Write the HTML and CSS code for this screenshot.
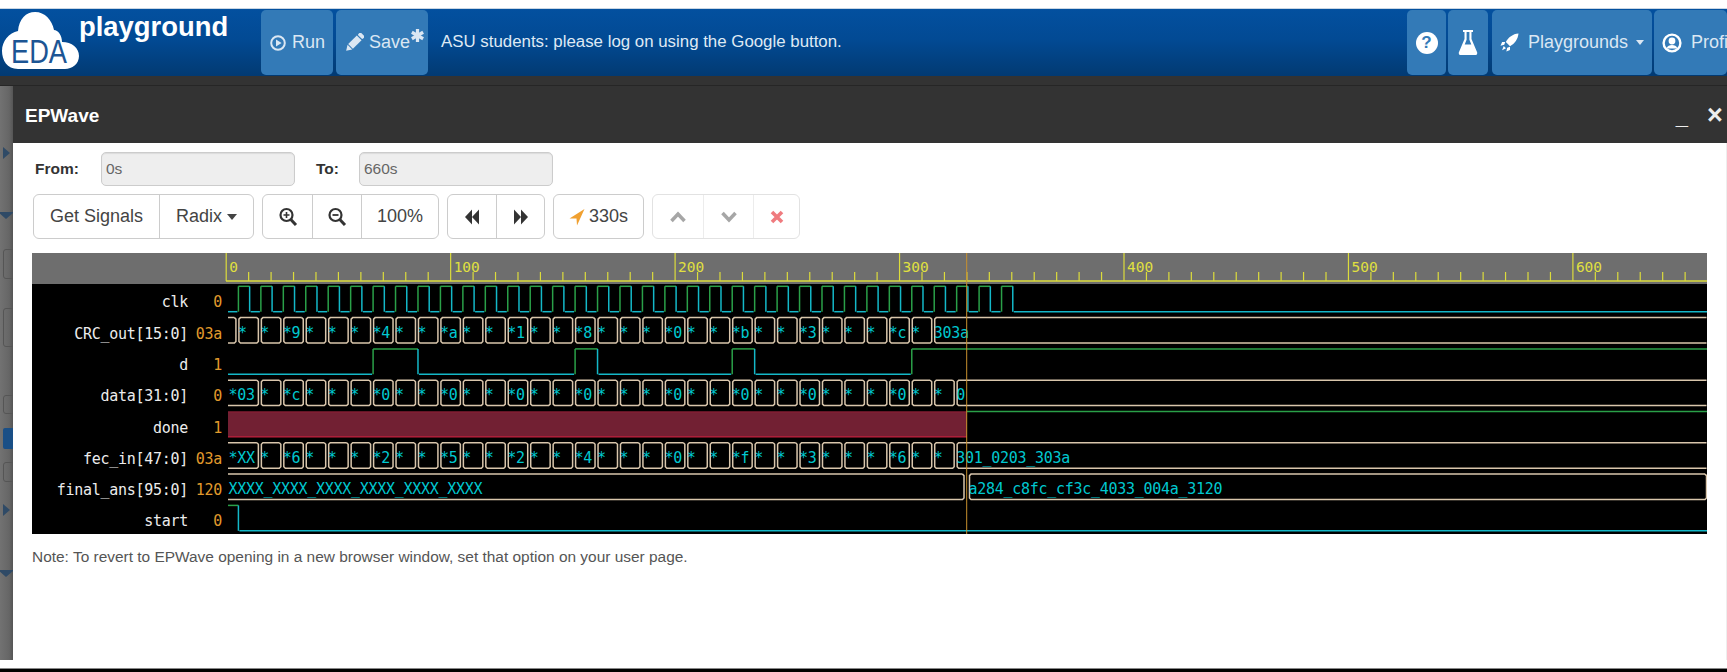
FILE: index.html
```html
<!DOCTYPE html>
<html lang="en">
<head>
    <meta charset="UTF-8">
    <title>EDA Playground - EPWave</title>
    <link rel="stylesheet" href="styles.css">
</head>
<body>
    <div class="topgap"></div>
    <nav class="navbar">
        <div class="logo">
            <svg class="logo-cloud" width="82" height="67" viewBox="0 9 82 67">
                <path fill="#fff" d="M18 69C7 69 2 60 2 51C2 41 9 33 18 31C19 19 26 12 35 12C45 12 52 20 54 30C58 30 62 35 62 42C72 42 79 48 79 56C79 64 72 69 65 69Z"/>
                <text x="11" y="63" class="logo-eda" textLength="56" lengthAdjust="spacingAndGlyphs">EDA</text>
            </svg>
            <span class="logo-text">playground</span>
        </div>
        <a class="nav-btn btn-run">
            <svg width="16" height="16" viewBox="0 0 16 16"><circle cx="8" cy="8" r="6.8" fill="none" stroke="currentColor" stroke-width="2"/><polygon points="6,4.4 11.6,8 6,11.6" fill="currentColor"/></svg>
            Run
        </a>
        <a class="nav-btn btn-save">
            <svg width="20" height="20" viewBox="0 0 18 18"><g transform="rotate(45 9 9)" fill="currentColor"><rect x="6" y="-2" width="6" height="3.4" rx="1"/><rect x="6" y="2.4" width="6" height="11"/><polygon points="6,14.2 12,14.2 9,19"/></g></svg>
            Save
            <svg class="save-star" width="13" height="13" viewBox="0 0 12 12"><g stroke="currentColor" stroke-width="3"><line x1="6" y1="0" x2="6" y2="12"/><line x1="0.8" y1="3" x2="11.2" y2="9"/><line x1="0.8" y1="9" x2="11.2" y2="3"/></g></svg>
        </a>
        <div class="nav-msg">ASU students: please log on using the Google button.</div>
        <a class="nav-btn btn-help"><span class="help-dot">?</span></a>
        <a class="nav-btn btn-flask">
            <svg width="22" height="27" viewBox="0 0 20 27"><path fill="#fff" fill-rule="evenodd" d="M5 1h10v2h-1.5v7l5.5 13a2 2 0 0 1-2 3H3a2 2 0 0 1-2-3l5.5-13V3H5zM8.6 3v7.8L6.7 15.5h6.6l-1.9-4.7V3z"/></svg>
        </a>
        <a class="nav-btn btn-playgrounds">
            <svg width="19" height="19" viewBox="0 0 18 18" fill="#fff"><path d="M17.5 .5C12 1 8 4 5.5 8.5l4 4C14 10 17 6 17.5 .5z"/><path d="M5 8.5H2L.5 12l3.5-.8z"/><path d="M9.5 13v3L6 17.5l.8-3.5z"/><path d="M3.5 12.3l2.2 2.2L2 16.4z"/></svg>
            <span class="nav-label">Playgrounds</span>
            <span class="caret caret-nav"></span>
        </a>
        <a class="nav-btn btn-profile">
            <svg width="20" height="20" viewBox="0 0 20 20"><circle cx="10" cy="10" r="8.4" fill="none" stroke="#fff" stroke-width="2.4"/><circle cx="10" cy="8" r="3.4" fill="#fff"/><path d="M4.5 15.5c1-3 3-3.6 5.5-3.6s4.5 .6 5.5 3.6z" fill="#fff"/></svg>
            <span class="nav-label">Profile</span>
        </a>
    </nav>
    <div class="dimbar"></div>

    <div class="stage">
        <div class="sliver">
            <span class="tri tri-right tri-a"></span>
            <span class="tri tri-down tri-b"></span>
            <span class="ghost ghost-a"></span>
            <span class="ghost ghost-b"></span>
            <span class="ghost ghost-c"></span>
            <span class="ghost-check"></span>
            <span class="ghost ghost-d"></span>
            <span class="tri tri-right tri-c"></span>
            <span class="tri tri-down tri-d"></span>
        </div>

        <div class="modal">
            <div class="modal-head">
                <span class="modal-title">EPWave</span>
                <span class="modal-min">_</span>
                <span class="modal-close">×</span>
            </div>
            <div class="modal-body">
                <div class="range-row">
                    <label class="range-label from-label">From:</label>
                    <input class="range-input" type="text" value="0s" disabled>
                    <label class="range-label to-label">To:</label>
                    <input class="range-input" type="text" value="660s" disabled>
                </div>

                <div class="toolbar">
                    <div class="btn-group">
                        <button class="tool w-signals">Get Signals</button>
                        <button class="tool w-radix">Radix <span class="caret caret-tool"></span></button>
                    </div>
                    <div class="btn-group">
                        <button class="tool w-icon">
                            <svg width="20" height="20" viewBox="0 0 20 20"><circle cx="8.5" cy="8" r="6" fill="none" stroke="#333" stroke-width="2.2"/><line x1="12.8" y1="12.5" x2="18" y2="18" stroke="#333" stroke-width="3"/><path d="M8.5 5v6M5.5 8h6" stroke="#333" stroke-width="1.6"/></svg>
                        </button>
                        <button class="tool w-icon">
                            <svg width="20" height="20" viewBox="0 0 20 20"><circle cx="8.5" cy="8" r="6" fill="none" stroke="#333" stroke-width="2.2"/><line x1="12.8" y1="12.5" x2="18" y2="18" stroke="#333" stroke-width="3"/><path d="M5.5 8h6" stroke="#333" stroke-width="1.8"/></svg>
                        </button>
                        <button class="tool w-pct">100%</button>
                    </div>
                    <div class="btn-group">
                        <button class="tool w-jump">
                            <svg width="18" height="18" viewBox="0 0 18 18" fill="#333"><polygon points="9,1.5 2,9 9,16.5"/><polygon points="16,1.5 9,9 16,16.5"/></svg>
                        </button>
                        <button class="tool w-jump">
                            <svg width="18" height="18" viewBox="0 0 18 18" fill="#333"><polygon points="2,1.5 9,9 2,16.5"/><polygon points="9,1.5 16,9 9,16.5"/></svg>
                        </button>
                    </div>
                    <div class="btn-group">
                        <button class="tool w-cursor">
                            <svg width="16" height="18" viewBox="0 0 16 18" fill="#f0a030"><polygon points="15.5,1 .5,10.5 7.5,10.5 8,17.5"/></svg>
                            330s
                        </button>
                    </div>
                    <div class="btn-group group-off">
                        <button class="tool w-nav">
                            <svg width="18" height="14" viewBox="0 0 18 14"><polyline points="2.5,11 9,4 15.5,11" fill="none" stroke="#777" stroke-width="3.5"/></svg>
                        </button>
                        <button class="tool w-nav">
                            <svg width="18" height="14" viewBox="0 0 18 14"><polyline points="2.5,3 9,10 15.5,3" fill="none" stroke="#777" stroke-width="3.5"/></svg>
                        </button>
                        <button class="tool w-del">
                            <svg width="14" height="14" viewBox="0 0 14 14"><path d="M2 2l10 10M12 2L2 12" stroke="#e8363c" stroke-width="3.6"/></svg>
                        </button>
                    </div>
                </div>

                <div class="wave" id="wave"></div>

                <p class="note">Note: To revert to EPWave opening in a new browser window, set that option on your user page.</p>
            </div>
        </div>
    </div>
    <div class="bottomgap"></div>
    <div class="bottombar"></div>

    <script src="wave.js"></script>
</body>
</html>
```

FILE: styles.css
```css
html, body {
    margin: 0;
    padding: 0;
    height: 672px;
    overflow: hidden;
    background: #fff;
}

body {
    font-family: "Liberation Sans", Arial, sans-serif;
    display: flex;
    flex-direction: column;
}

.topgap {
    height: 9px;
    flex: none;
    background: #fff;
    box-shadow: inset 0 -1px 0 #c9d6e4;
}

/* top nav */
.navbar {
    height: 67px;
    flex: none;
    display: flex;
    align-items: stretch;
    box-sizing: border-box;
    padding: 1px 0;
    overflow: hidden;
    background: linear-gradient(#03509f, #024a94 45%, #023a72);
    color: #fff;
}

.logo {
    width: 261px;
    flex: none;
    display: flex;
    align-items: flex-start;
}

.logo-cloud {
    margin-top: -1px;
    flex: none;
}

.logo-eda {
    font-size: 33px;
    fill: #1c5594;
}

.logo-text {
    margin: 0 0 0 -3px;
    font-size: 27.4px;
    font-weight: bold;
    line-height: 33px;
    color: #fff;
}

.nav-btn {
    flex: none;
    box-sizing: border-box;
    display: flex;
    align-items: center;
    border-radius: 5px;
    background: #337ab7;
    color: #dbe7f3;
    font-size: 18px;
    white-space: nowrap;
    overflow: hidden;
}

.nav-btn svg {
    flex: none;
}

.btn-run {
    width: 72px;
    padding-left: 9px;
    gap: 6px;
}

.btn-save {
    width: 92px;
    margin-left: 3px;
    padding-left: 8px;
    gap: 5px;
}

.save-star {
    margin: -15px 0 0 -4px;
}

.nav-msg {
    flex: 1;
    padding: 0 0 2px 13px;
    display: flex;
    align-items: center;
    font-size: 16.85px;
    color: #dfe9f4;
    white-space: nowrap;
}

.btn-help {
    width: 39px;
    justify-content: center;
}

.help-dot {
    width: 22px;
    height: 22px;
    border-radius: 50%;
    background: #fff;
    color: #337ab7;
    font-size: 17px;
    font-weight: bold;
    line-height: 22px;
    text-align: center;
}

.btn-flask {
    width: 40px;
    margin-left: 2px;
    justify-content: center;
}

.btn-playgrounds {
    width: 160px;
    margin-left: 4px;
    padding-left: 8px;
    gap: 9px;
}

.btn-profile {
    width: 73px;
    margin-left: 2px;
    padding-left: 8px;
    gap: 9px;
}

.caret {
    display: inline-block;
    width: 0;
    height: 0;
    border-left: 4.5px solid transparent;
    border-right: 4.5px solid transparent;
    border-top: 5px solid currentColor;
}

.caret-nav {
    margin-left: -1px;
}

.dimbar {
    height: 10px;
    flex: none;
    background: #333;
    box-shadow: inset 0 -1px 0 #262626;
}

/* modal + dimmed page behind */
.stage {
    height: 574px;
    flex: none;
    display: flex;
}

.sliver {
    width: 13px;
    flex: none;
    overflow: hidden;
    background: linear-gradient(90deg, #727272, #666 70%, #555);
}

.sliver span {
    display: block;
}

.tri {
    width: 0;
    height: 0;
}

.tri-right {
    border-top: 6px solid transparent;
    border-bottom: 6px solid transparent;
    border-left: 7px solid #2f4a66;
    margin-left: 3px;
}

.tri-down {
    border-left: 8px solid transparent;
    border-right: 8px solid transparent;
    border-top: 7px solid #2f4a66;
    margin-left: -2px;
}

.tri-a { margin-top: 61px; }
.tri-b { margin-top: 53px; }
.tri-c { margin-top: 22px; }
.tri-d { margin-top: 54px; }

.ghost {
    width: 16px;
    box-sizing: border-box;
    margin-left: 3px;
    border: 1px solid #555;
    border-radius: 3px;
}

.ghost-a { height: 30px; margin-top: 30px; }
.ghost-b { height: 39px; margin-top: 29px; }
.ghost-c { height: 19px; margin-top: 48px; }
.ghost-d { height: 20px; margin-top: 13px; }

.ghost-check {
    width: 16px;
    height: 21px;
    margin: 14px 0 0 3px;
    border-radius: 2px;
    background: #1a4f86;
}

.modal {
    flex: 1;
    min-width: 0;
    display: flex;
    flex-direction: column;
}

.modal-head {
    height: 57px;
    flex: none;
    box-sizing: border-box;
    display: flex;
    align-items: center;
    padding: 2px 0 0 12px;
    background: #333;
    color: #fff;
}

.modal-title {
    flex: 1;
    font-size: 19px;
    font-weight: bold;
}

.modal-min {
    font-size: 22px;
    font-weight: bold;
    line-height: 22px;
    margin-top: 3px;
    color: #eee;
}

.modal-close {
    width: 17px;
    margin-left: 19px;
    margin-right: 3px;
    font-size: 27px;
    font-weight: bold;
    line-height: 27px;
    color: #eee;
}

.modal-body {
    flex: 1;
    background: #fff;
    padding: 9px 0 0 19px;
    border-right: 1px solid #eee;
}

.range-row {
    display: flex;
    align-items: center;
    height: 34px;
}

.range-label {
    font-size: 15.5px;
    font-weight: bold;
    color: #333;
}

.from-label {
    width: 66px;
    margin-left: 3px;
}

.to-label {
    width: 43px;
    margin-left: 21px;
}

.range-input {
    width: 194px;
    height: 34px;
    box-sizing: border-box;
    padding: 0 4px;
    border: 1px solid #ccc;
    border-radius: 5px;
    background: #eee;
    color: #666;
    font-family: inherit;
    font-size: 15.5px;
    box-shadow: inset 0 1px 1px rgba(0, 0, 0, .08);
}

.toolbar {
    display: flex;
    margin: 8px 0 0 1px;
    gap: 8px;
}

.btn-group {
    display: flex;
    height: 45px;
    box-sizing: border-box;
    border: 1px solid #ccc;
    border-radius: 6px;
}

.group-off {
    border-color: #e2e2e2;
}

.tool {
    height: 43px;
    box-sizing: border-box;
    padding: 0;
    display: flex;
    align-items: center;
    justify-content: center;
    gap: 4px;
    border: none;
    border-left: 1px solid #ccc;
    background: none;
    font-family: inherit;
    font-size: 18px;
    color: #444;
}

.tool:first-child {
    border-left: none;
}

.group-off .tool {
    border-left-color: #e2e2e2;
    opacity: .65;
}

.group-off .tool:first-child {
    border-left: none;
}

.w-signals { width: 125px; }
.w-radix { width: 94px; gap: 5px; }
.w-icon { width: 49px; }
.w-pct { width: 77px; }
.w-jump { width: 48px; }
.w-cursor { width: 89px; }
.w-nav { width: 50px; }
.w-del { width: 46px; }

.caret-tool {
    border-left-width: 5px;
    border-right-width: 5px;
    border-top-width: 6px;
}

.wave {
    width: 1675px;
    height: 281px;
    margin-top: 14px;
}

.wave svg {
    display: block;
}

.wave text {
    font-family: "DejaVu Sans Mono", monospace;
    font-size: 15px;
    letter-spacing: -0.28px;
}

.wave .lbl { fill: #ececec; text-anchor: end; }
.wave .val { fill: #e09a2c; text-anchor: end; }
.wave .bus-text { fill: #00c8d0; }
.wave .tick-text { fill: #e0e040; font-size: 14.5px; letter-spacing: 0; }

.note {
    margin: 14px 0 0 0;
    font-size: 15.45px;
    color: #555;
}

.bottomgap {
    height: 8px;
    flex: none;
    background: #fff;
}

.bottombar {
    flex: 1;
    background: #000;
    border-top: 1px solid #888;
}
```

FILE: wave.js
```js
// draws the EPWave canvas, coords are page pixels (viewBox starts at the canvas corner)
const NS = 'http://www.w3.org/2000/svg';
const svg = document.createElementNS(NS, 'svg');
svg.setAttribute('width', 1675);
svg.setAttribute('height', 281);
svg.setAttribute('viewBox', '32 253 1675 281');
document.getElementById('wave').appendChild(svg);

const LEFT = 228, RIGHT = 1707;
const GREEN = '#2aa048', TEAL = '#14b8c8', TAN = '#d9c6ac', YELLOW = '#dcdc3c';

function tx(t) { return 226.2 + 2.2445 * t; }
function rowTop(i) { return 286.3 + 31.3 * i; }

function el(name, attrs, text) {
    const e = document.createElementNS(NS, name);
    for (const k in attrs) e.setAttribute(k, attrs[k]);
    if (text !== undefined) e.textContent = text;
    svg.appendChild(e);
    return e;
}

function line(x1, y1, x2, y2, color, w) {
    el('line', { x1, y1, x2, y2, stroke: color, 'stroke-width': w || 1.5 });
}

// backgrounds
el('rect', { x: 32, y: 253, width: 1675, height: 31, fill: '#6e6e6e' });
el('rect', { x: 32, y: 284, width: 1675, height: 250, fill: '#000' });

// ruler
line(226, 281, RIGHT, 281, YELLOW, 1.5);
for (let t = 0; t <= 660; t += 10) {
    const x = tx(t);
    if (t % 100 === 0) {
        line(x, 253, x, 281, YELLOW, 1.2);
        el('text', { x: x + 3, y: 272, class: 'tick-text' }, String(t));
    } else {
        line(x, 272, x, 281, YELLOW, 1.2);
    }
}

// signal names and cursor values
const signals = [
    ['clk', '0'], ['CRC_out[15:0]', '03a'], ['d', '1'], ['data[31:0]', '0'],
    ['done', '1'], ['fec_in[47:0]', '03a'], ['final_ans[95:0]', '120'], ['start', '0']
];
signals.forEach(function (s, i) {
    el('text', { x: 188, y: rowTop(i) + 21, class: 'lbl' }, s[0]);
    el('text', { x: 222, y: rowTop(i) + 21, class: 'val' }, s[1]);
});

const H = 25.4;

// single bit wave: list of [start, end] times where the signal is high
function bit(row, highs) {
    const top = rowTop(row), low = top + H;
    let x = LEFT;
    highs.forEach(function (h) {
        const a = h[0] === null ? LEFT : tx(h[0]) + 1;
        const b = h[1] === null ? RIGHT : tx(h[1]) + 1;
        if (a > x) line(x, low, a - 1, low, TEAL);
        if (h[0] !== null) line(a, low, a, top, GREEN);
        line(a, top, b, top, GREEN);
        if (h[1] !== null) line(b, top, b, low, TEAL);
        x = b + 1;
    });
    if (x < RIGHT) line(x, low, RIGHT, low, TEAL);
}

// clk toggles every 5 until 350
const clkHighs = [];
for (let t = 5; t < 350; t += 10) clkHighs.push([t, t + 5]);
bit(0, clkHighs);

bit(2, [[65, 85], [155, 165], [225, 235], [305, null]]);
bit(7, [[null, 5]]);

// bus wave: segs = [startX, endX, label, closeRightEnd]
function bus(row, segs) {
    const top = rowTop(row), low = top + H;
    const c = 1.5; // corner cut
    segs.forEach(function (s, n) {
        const openLeft = n === 0;
        const toEdge = s[1] >= RIGHT;
        const closeRight = !toEdge || s[3];
        const x0 = openLeft ? s[0] : s[0] + 1.5;
        const x1 = toEdge ? s[1] - 0.5 : s[1] - 1.5;
        const left = openLeft ? x0 : x0 + c;
        const right = closeRight ? x1 - c : x1;
        let d = 'M' + right + ' ' + top + 'L' + left + ' ' + top;
        if (openLeft) d += 'M' + left + ' ' + low;
        else d += 'L' + x0 + ' ' + (top + c) + 'L' + x0 + ' ' + (low - c) + 'L' + left + ' ' + low;
        d += 'L' + right + ' ' + low;
        if (closeRight) d += 'L' + x1 + ' ' + (low - c) + 'L' + x1 + ' ' + (top + c) + 'L' + right + ' ' + top;
        el('path', { d, fill: 'none', stroke: TAN, 'stroke-width': 1.5 });
        if (s[2]) el('text', { x: s[0] + 0.5, y: top + 20, class: 'bus-text' }, s[2]);
    });
}

function stars(map, count) {
    const out = [];
    for (let i = 0; i < count; i++) out.push(map[i] || '*');
    return out;
}

// CRC_out changes on every rising clk from t=5 up to 315
const crcSegs = [[LEFT, tx(5), '']];
stars({ 2: '*9', 6: '*4', 9: '*a', 12: '*1', 15: '*8', 19: '*0', 22: '*b', 25: '*3', 29: '*c' }, 31).forEach(function (l, i) {
    crcSegs.push([tx(5 + i * 10), tx(15 + i * 10), l]);
});
crcSegs.push([tx(315), RIGHT, '303a']);
bus(1, crcSegs);

// data and fec_in share their edges, the first value runs until t=15
function longBus(row, first, map, lastText) {
    const segs = [[LEFT, tx(15), first]];
    stars(map, 32).forEach(function (l, i) {
        if (i > 0) segs.push([tx(5 + i * 10), tx(15 + i * 10), l]);
    });
    segs.push([tx(325), RIGHT, lastText]);
    bus(row, segs);
}

longBus(3, '*03', { 2: '*c', 6: '*0', 9: '*0', 12: '*0', 15: '*0', 19: '*0', 22: '*0', 25: '*0', 29: '*0' }, '0');

// done is x (red) until the cursor, then high
el('rect', { x: LEFT, y: rowTop(4), width: 967 - LEFT, height: H, fill: '#722033' });
line(LEFT, rowTop(4) + 0.5, 967, rowTop(4) + 0.5, '#8c1c34', 1.2);
line(LEFT, rowTop(4) + H, 967, rowTop(4) + H, '#c4203f', 1.2);
line(967, rowTop(4), RIGHT, rowTop(4), GREEN);

longBus(5, '*XX', { 2: '*6', 6: '*2', 9: '*5', 12: '*2', 15: '*4', 19: '*0', 22: '*f', 25: '*3', 29: '*6' }, '301_0203_303a');

bus(6, [
    [LEFT, 965.5, 'XXXX_XXXX_XXXX_XXXX_XXXX_XXXX'],
    [968, RIGHT, 'a284_c8fc_cf3c_4033_004a_3120', true]
]);

// cursor at 330
line(966.7, 253, 966.7, 534, '#c8902e', 1);
```
